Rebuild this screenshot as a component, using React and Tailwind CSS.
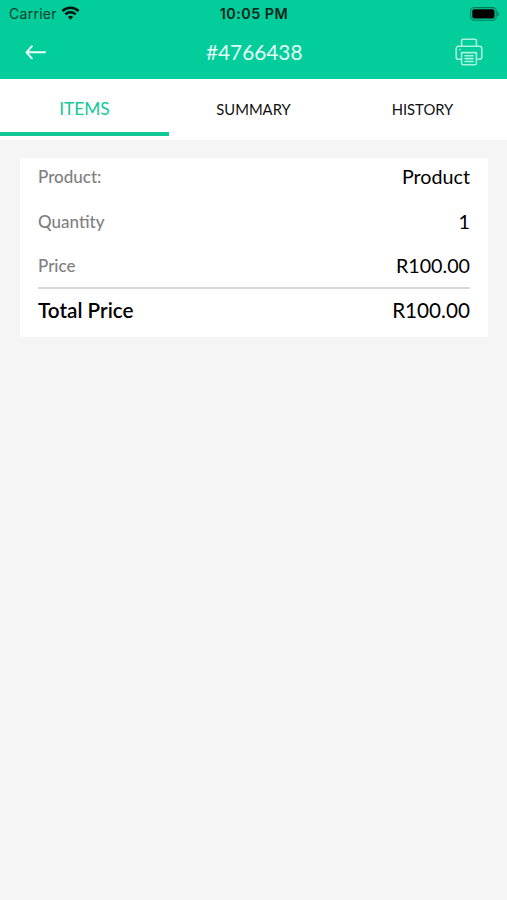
import clsx from "clsx"

const tabs = ["ITEMS", "SUMMARY", "HISTORY"]

const details = [
    { label: "Product:", value: "Product" },
    { label: "Quantity", value: "1" },
    { label: "Price", value: "R100.00" },
]

const WifiIcon = () => (
    <svg width="19" height="14" viewBox="0 0 18 14" fill="none" stroke="#04140f" strokeWidth="2.5" className="mb-[2px]">
        <path d="M0.9 5.1a11.6 11.6 0 0 1 16.2 0" />
        <path d="M3.8 8.4a7.4 7.4 0 0 1 10.4 0" />
        <path d="M9 13.8l-2.6-2.7a3.7 3.7 0 0 1 5.2 0z" fill="#04140f" stroke="none" />
    </svg>
)

const BatteryIcon = () => (
    <svg width="30" height="14" viewBox="0 0 30 14" fill="none">
        <rect x="0.6" y="0.6" width="25.6" height="12.6" rx="3.6" stroke="#027a5b" strokeWidth="1.1" />
        <rect x="2.3" y="2.3" width="22.2" height="9.3" rx="2" fill="#000" />
        <path d="M27.5 4.8c1.9.6 1.9 3.8 0 4.4z" fill="#027a5b" />
    </svg>
)

const BackIcon = () => (
    <svg width="22" height="16" viewBox="0 0 22 16" fill="none" stroke="#effffa" strokeWidth="2" strokeLinecap="round" strokeLinejoin="round">
        <path d="M20 8.3H1.7M6.8 2.3L1.5 8.3l5.3 6" />
    </svg>
)

const PrinterIcon = () => (
    <svg width="28" height="28" viewBox="0 0 28 28" fill="none" stroke="#a9f3dd" strokeWidth="1.6" strokeLinecap="round" strokeLinejoin="round">
        <path d="M6.6 8.3V2.7a1.5 1.5 0 0 1 1.5-1.5h11.8a1.5 1.5 0 0 1 1.5 1.5v5.6" />
        <path d="M6.4 21.3H3.3a2.1 2.1 0 0 1-2.1-2.1v-8.6a2.3 2.3 0 0 1 2.3-2.3h21a2.3 2.3 0 0 1 2.3 2.3v8.6a2.1 2.1 0 0 1-2.1 2.1h-3.1" />
        <path d="M6.6 14.6h14.8v10.7a1.5 1.5 0 0 1-1.5 1.5H8.1a1.5 1.5 0 0 1-1.5-1.5z" />
        <path d="M10 17.8h8M10 20.6h8M10 23.5h8M4.8 11.6h.2" />
    </svg>
)

const StatusBar = () => (
    <div className="grid grid-cols-3 items-center h-[27px] pl-2 pr-[7px] font-['Inter',sans-serif] text-[14px]">
        <div className="flex items-center gap-1 pl-px text-[#063d2f]">
            <span className="tracking-[0.02em]">Carrier</span>
            <WifiIcon />
        </div>
        <span className="text-center text-[14.3px] font-semibold tracking-[0.035em] text-[#04241b] whitespace-nowrap">10:05 PM</span>
        <div className="flex justify-end">
            <BatteryIcon />
        </div>
    </div>
)

const App = () => {
    return (
        <div className="min-h-[900px] bg-[#f5f5f5] font-['Lato',sans-serif] text-[#111]">
            <header className="h-[79px] bg-[#03cd9a]">
                <StatusBar />
                <div className="grid grid-cols-3 items-center h-[50px] pl-[25px] pr-[23.5px]">
                    <button className="justify-self-start" aria-label="Back"><BackIcon /></button>
                    <h1 className="text-center text-[20.8px] text-[#e4fff7]">#4766438</h1>
                    <button className="justify-self-end" aria-label="Print"><PrinterIcon /></button>
                </div>
            </header>

            <nav className="grid grid-cols-3 h-[61px] bg-white">
                {tabs.map((tab, i) => (
                    <button
                        key={tab}
                        className={clsx(
                            "h-[57px] border-b-4",
                            i === 0 ? "pt-[7px] border-[#10c997] text-[#10c997] text-[17.3px]" : "pt-[7px] border-transparent text-[14.8px]"
                        )}
                    >
                        {tab}
                    </button>
                ))}
            </nav>

            <section className="mt-[18px] ml-5 mr-[19px] h-[179px] px-[18px] bg-white">
                {details.map(({ label, value }) => (
                    <div key={label} className="flex justify-between items-start h-[44.3px] pt-1">
                        <span className="pt-[0.4px] text-[17px] leading-[30px] font-medium text-[#808080]">{label}</span>
                        <span className="pt-[0.3px] text-[19.7px] leading-[30px] text-black">{value}</span>
                    </div>
                ))}
                <div className="flex justify-between -mt-[3.5px] pt-[6px] border-t-2 border-[#d8d8d8] text-[20.7px] leading-[30px] text-black">
                    <span className="font-semibold">Total Price</span>
                    <span>R100.00</span>
                </div>
            </section>
        </div>
    )
}

export default App
